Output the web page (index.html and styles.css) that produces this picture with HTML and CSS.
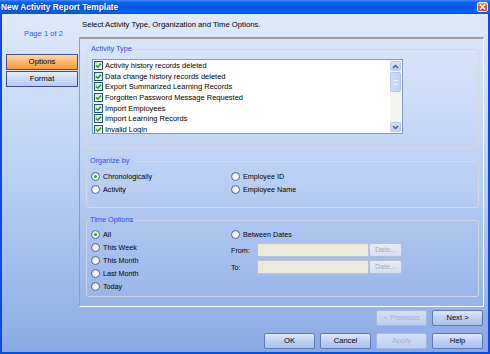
FILE: index.html
```html
<!DOCTYPE html>
<html>
<head>
<meta charset="utf-8">
<title>New Activity Report Template</title>
<link rel="stylesheet" href="styles.css">
</head>
<body>
<div class="window">
  <div class="titlebar">
    <span class="title">New Activity Report Template</span>
    <span class="close"><svg width="7" height="6" viewBox="0 0 7 6"><path d="M1 0.5 L6 5.5 M6 0.5 L1 5.5" stroke="#fff" stroke-width="1.4"/></svg></span>
  </div>
  <div class="body">
    <div class="sidebar">
      <div class="page">Page 1 of 2</div>
      <div class="tabs">
        <div class="tab active">Options</div>
        <div class="tab">Format</div>
      </div>
    </div>
    <div class="main">
      <div class="instr">Select Activity Type, Organization and Time Options.</div>
      <div class="panel">
        <fieldset class="group g-activity">
          <legend>Activity Type</legend>
          <div class="listbox">
            <ul class="items">
              <li><span class="cb"><svg width="7" height="7" viewBox="0 0 7 7"><path d="M1 3.4 L2.8 5.2 L6 1.6" stroke="#22a322" stroke-width="1.6" fill="none"/></svg></span>Activity history records deleted</li>
              <li><span class="cb"><svg width="7" height="7" viewBox="0 0 7 7"><path d="M1 3.4 L2.8 5.2 L6 1.6" stroke="#22a322" stroke-width="1.6" fill="none"/></svg></span>Data change history records deleted</li>
              <li><span class="cb"><svg width="7" height="7" viewBox="0 0 7 7"><path d="M1 3.4 L2.8 5.2 L6 1.6" stroke="#22a322" stroke-width="1.6" fill="none"/></svg></span>Export Summarized Learning Records</li>
              <li><span class="cb"><svg width="7" height="7" viewBox="0 0 7 7"><path d="M1 3.4 L2.8 5.2 L6 1.6" stroke="#22a322" stroke-width="1.6" fill="none"/></svg></span>Forgotten Password Message Requested</li>
              <li><span class="cb"><svg width="7" height="7" viewBox="0 0 7 7"><path d="M1 3.4 L2.8 5.2 L6 1.6" stroke="#22a322" stroke-width="1.6" fill="none"/></svg></span>Import Employees</li>
              <li><span class="cb"><svg width="7" height="7" viewBox="0 0 7 7"><path d="M1 3.4 L2.8 5.2 L6 1.6" stroke="#22a322" stroke-width="1.6" fill="none"/></svg></span>Import Learning Records</li>
              <li><span class="cb"><svg width="7" height="7" viewBox="0 0 7 7"><path d="M1 3.4 L2.8 5.2 L6 1.6" stroke="#22a322" stroke-width="1.6" fill="none"/></svg></span>Invalid Login</li>
            </ul>
            <div class="scrollbar">
              <div class="sb-btn"><svg width="7" height="5" viewBox="0 0 7 5"><path d="M1 4 L3.5 1.5 L6 4" stroke="#4d6185" stroke-width="1.5" fill="none"/></svg></div>
              <div class="sb-thumb"><span></span></div>
              <div class="sb-track"></div>
              <div class="sb-btn"><svg width="7" height="5" viewBox="0 0 7 5"><path d="M1 1 L3.5 3.5 L6 1" stroke="#4d6185" stroke-width="1.5" fill="none"/></svg></div>
            </div>
          </div>
        </fieldset>

        <fieldset class="group g-org">
          <legend>Organize by</legend>
          <div class="radio-grid">
            <div class="opt"><span class="rb on"></span>Chronologically</div>
            <div class="opt"><span class="rb"></span>Employee ID</div>
            <div class="opt"><span class="rb"></span>Activity</div>
            <div class="opt"><span class="rb"></span>Employee Name</div>
          </div>
        </fieldset>

        <fieldset class="group g-time">
          <legend>Time Options</legend>
          <div class="time-cols">
            <div class="time-left">
              <div class="opt"><span class="rb on"></span>All</div>
              <div class="opt"><span class="rb"></span>This Week</div>
              <div class="opt"><span class="rb"></span>This Month</div>
              <div class="opt"><span class="rb"></span>Last Month</div>
              <div class="opt"><span class="rb"></span>Today</div>
            </div>
            <div class="time-right">
              <div class="opt"><span class="rb"></span>Between Dates</div>
              <div class="date-row from"><span class="dlabel">From:</span><span class="dinput"></span><span class="dbtn">Date...</span></div>
              <div class="date-row to"><span class="dlabel">To:</span><span class="dinput"></span><span class="dbtn">Date...</span></div>
            </div>
          </div>
        </fieldset>
      </div>
      <div class="nav">
        <span class="btn disabled">&lt; Previous</span>
        <span class="btn">Next &gt;</span>
      </div>
      <div class="actions">
        <span class="btn">OK</span>
        <span class="btn">Cancel</span>
        <span class="btn disabled">Apply</span>
        <span class="btn">Help</span>
      </div>
    </div>
  </div>
</div>
</body>
</html>
```

FILE: styles.css
```css
* { box-sizing: border-box; }
html, body { margin: 0; padding: 0; }
body {
  width: 490px;
  height: 354px;
  overflow: hidden;
  font-family: "Liberation Sans", Arial, sans-serif;
  color: #000;
}
.window {
  width: 490px;
  height: 354px;
  display: flex;
  flex-direction: column;
}
.titlebar {
  height: 14px;
  flex: none;
  display: flex;
  align-items: center;
  justify-content: space-between;
  padding: 0 2px 0 1px;
  background: linear-gradient(#3a8ef8 0%, #0b5fea 18%, #0056e6 55%, #0b62ef 85%, #0a4bd6 100%);
}
.title {
  color: #fff;
  font-weight: bold;
  font-size: 8.4px;
  line-height: 11px;
  text-shadow: 1px 1px 0 #0a3aa0;
}
.close {
  width: 11px;
  height: 10px;
  border: 1px solid #f6e6de;
  border-radius: 2px;
  background: linear-gradient(#f19474, #e05a2c 55%, #cf4a1e);
  display: flex;
  align-items: center;
  justify-content: center;
}
.body {
  flex: 1;
  display: flex;
  border: 2px solid #0b4ce0;
  border-top: none;
  background: linear-gradient(#dfeafb 0%, #b8cff2 50%, #8baae4 100%);
}
.sidebar {
  width: 77px;
  flex: none;
  padding: 15px 1px 0 4px;
}
.page {
  font-size: 7.6px;
  line-height: 10px;
  color: #2f5fd0;
  text-align: center;
  padding-left: 3px;
}
.tabs {
  margin-top: 15px;
  display: flex;
  flex-direction: column;
  gap: 1px;
}
.tab {
  height: 16px;
  border: 1px solid #3e4f86;
  font-size: 7.8px;
  line-height: 14px;
  text-align: center;
  background: linear-gradient(#e3ecfb, #b5cbef);
}
.tab.active {
  background: linear-gradient(#ffd7a8, #fbb266 55%, #f59a3f);
  border-color: #4a4a7e;
}
.main {
  flex: 1;
  display: flex;
  flex-direction: column;
}
.instr {
  font-size: 7.7px;
  line-height: 10px;
  padding: 6px 0 0 3px;
}
.panel {
  margin: 7px 4px 0 0;
  height: 270px;
  border-top: 2px solid #9c9c9c;
  border-left: 1px solid #9c9c9c;
  border-right: 1px solid #fff;
  border-bottom: 1px solid #fff;
  padding: 5px 4px 0 6px;
  display: flex;
  flex-direction: column;
}
.group {
  margin: 0;
  border: 1px solid #d0d8e4;
  border-radius: 3px;
  min-width: 0;
}
.group legend {
  font-size: 7.3px;
  line-height: 10px;
  color: #1f52e0;
  padding: 0 1px;
  margin-left: -2px;
}
.g-activity {
  padding: 5px 0 14px 5px;
}
.g-org {
  margin-top: 7px;
  padding: 4px 0 11px 4px;
}
.g-time {
  margin-top: 7px;
  padding: 3px 0 3px 4px;
}
.listbox {
  width: 311px;
  height: 75px;
  border: 1px solid #7f9db9;
  background: #fff;
  display: flex;
  overflow: hidden;
}
.items {
  list-style: none;
  margin: 0;
  padding: 0;
  flex: 1;
}
.items li {
  height: 10.7px;
  display: flex;
  align-items: center;
  font-size: 7.5px;
  white-space: nowrap;
}
.cb {
  width: 9px;
  height: 9px;
  margin: 0 2px 0 1px;
  border: 1px solid #1c5180;
  background: linear-gradient(135deg, #dcdcd5, #fff);
  display: flex;
  align-items: center;
  justify-content: center;
  flex: none;
}
.scrollbar {
  width: 12px;
  padding: 1px 1px 1px 0;
  display: flex;
  flex-direction: column;
  background: #f4f4f0;
}
.sb-btn {
  height: 10px;
  border: 1px solid #b9cbef;
  border-radius: 2px;
  background: linear-gradient(#d9e4fb, #bccff5);
  display: flex;
  align-items: center;
  justify-content: center;
}
.sb-thumb {
  height: 20px;
  margin-top: 1px;
  border: 1px solid #b3c6ee;
  border-radius: 2px;
  background: linear-gradient(90deg, #cfdcf9, #bfd1f6);
  display: flex;
  align-items: center;
  justify-content: center;
}
.sb-thumb span {
  width: 5px;
  height: 5px;
  border-top: 1px solid #eef3fd;
  border-bottom: 1px solid #eef3fd;
}
.sb-track { flex: 1; }
.opt {
  height: 13px;
  display: flex;
  align-items: center;
  font-size: 7.2px;
  white-space: nowrap;
}
.rb {
  width: 9px;
  height: 9px;
  border-radius: 50%;
  border: 1px solid #4f6a90;
  background: radial-gradient(circle at 65% 65%, #fff 0%, #f1f1ec 50%, #d5d5cd 100%);
  margin-right: 3px;
  flex: none;
  display: flex;
  align-items: center;
  justify-content: center;
}
.rb.on::after {
  content: "";
  width: 3px;
  height: 3px;
  border-radius: 50%;
  background: #25b025;
}
.radio-grid {
  display: grid;
  grid-template-columns: 140px 1fr;
}
.time-cols {
  display: flex;
}
.time-left { width: 140px; }
.time-right { display: flex; flex-direction: column; }
.date-row {
  display: flex;
  align-items: center;
  height: 14px;
  font-size: 7.2px;
}
.date-row.from { margin-top: 2px; }
.date-row.to { margin-top: 3px; }
.dlabel { width: 26px; }
.dinput {
  width: 112px;
  height: 14px;
  background: #ece9d8;
  border: 1px solid #b7c3d8;
}
.dbtn {
  width: 33px;
  height: 14px;
  border: 1px solid #b0bfdc;
  border-radius: 2px;
  background: linear-gradient(#e6ecf7, #d5dff0);
  color: #a3abbd;
  text-align: center;
  line-height: 12px;
  font-size: 7.2px;
}
.nav, .actions {
  display: flex;
  justify-content: flex-end;
  gap: 5px;
  padding-right: 5px;
}
.nav { margin-top: 3px; }
.actions { margin-top: 7px; }
.btn {
  width: 51px;
  height: 16px;
  border: 1px solid #5d79ad;
  border-radius: 2px;
  background: linear-gradient(#dce7fa, #b9cdf1 60%, #a9c1ec);
  font-size: 7.6px;
  line-height: 14px;
  text-align: center;
}
.btn.disabled {
  color: #a7b0c6;
  border-color: #a6b9dd;
  background: linear-gradient(#d3e0f7, #bccff2);
}
```
